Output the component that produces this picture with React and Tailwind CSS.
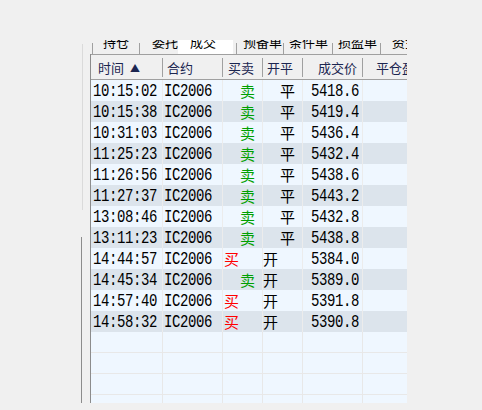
import React from 'react'

const TRADES = [
  ['10:15:02', 'IC2006', 'sell', 'close', '5418.6'],
  ['10:15:38', 'IC2006', 'sell', 'close', '5419.4'],
  ['10:31:03', 'IC2006', 'sell', 'close', '5436.4'],
  ['11:25:23', 'IC2006', 'sell', 'close', '5432.4'],
  ['11:26:56', 'IC2006', 'sell', 'close', '5438.6'],
  ['11:27:37', 'IC2006', 'sell', 'close', '5443.2'],
  ['13:08:46', 'IC2006', 'sell', 'close', '5432.8'],
  ['13:11:23', 'IC2006', 'sell', 'close', '5438.8'],
  ['14:44:57', 'IC2006', 'buy', 'open', '5384.0'],
  ['14:45:34', 'IC2006', 'sell', 'open', '5389.0'],
  ['14:57:40', 'IC2006', 'buy', 'open', '5391.8'],
  ['14:58:32', 'IC2006', 'buy', 'open', '5390.8'],
]

const cjk = { fontFamily: '"Noto Sans CJK SC", "Noto Sans", sans-serif' }
const mono = { fontFamily: '"Liberation Mono", "DejaVu Sans Mono", monospace' }

function Num({ children }) {
  return (
    <span className="inline-block scale-y-[1.3] text-[14px] leading-none tracking-[-0.4px] text-black" style={mono}>
      {children}
    </span>
  )
}

function TabSep() {
  return <span className="mt-[3px] h-[11px] w-px shrink-0 bg-[#a0a0a0]" />
}

function Tab({ label, w, pl, active }) {
  return (
    <div
      className={`shrink-0 overflow-hidden whitespace-nowrap text-[13px] leading-[13px] text-black ${active ? 'bg-white' : ''}`}
      style={{ ...cjk, width: w, paddingLeft: pl }}
    >
      <div className="-mt-[5px]">{label}</div>
    </div>
  )
}

function HeadCell({ w, children, right, pl = 0, pr = 0, last }) {
  return (
    <div className="flex h-full shrink-0 items-center overflow-hidden" style={{ width: w }}>
      <div
        className={`flex flex-1 items-center whitespace-nowrap pt-[1px] text-[13px] text-[#1b2550] ${right ? 'justify-end' : ''}`}
        style={{ ...cjk, paddingLeft: pl, paddingRight: pr }}
      >
        {children}
      </div>
      {!last && <span className="h-[19px] w-px shrink-0 bg-[#a0a0a0]" />}
    </div>
  )
}

export default function App() {
  return (
    <div className="flex h-[410px] w-[482px] overflow-hidden bg-[#f0f0f0]">
      {/* splitter edge */}
      <div className="w-[81px] shrink-0" />
      <div className="flex w-[2px] shrink-0 flex-col">
        <div className="h-[44px]" />
        <div className="ml-[1px] h-[166px] w-px bg-[#dadada]" />
        <div className="h-[27px]" />
        <div className="h-[166px] w-px bg-[#8c8c8c]" />
      </div>
      <div className="w-[7px] shrink-0" />

      <div className="flex w-[317px] shrink-0 flex-col pt-[40px]">
        {/* tabs */}
        <div className="flex h-[14px] overflow-hidden">
          <div className="w-[2px] shrink-0" />
          <TabSep />
          <Tab label="持仓" w={46} pl={10} />
          <TabSep />
          <Tab label="委托" w={38} pl={12} />
          <Tab label="成交" w={55} pl={12} active />
          <div className="w-[3px] shrink-0" />
          <TabSep />
          <Tab label="预备单" w={46} pl={6} />
          <TabSep />
          <Tab label="条件单" w={48} pl={5} />
          <TabSep />
          <Tab label="损盈单" w={47} pl={5} />
          <TabSep />
          <Tab label="资金" w={26} pl={11} />
        </div>

        {/* grid */}
        <div className="h-[349px] overflow-hidden border-l border-[#8c8c8c]">
          <div className="flex h-[26px] border-y border-[#a0a0a0] bg-[#f0f0f0]">
            <HeadCell w={72} pl={7}>
              时间<span className="ml-[6px] text-[10px]">▲</span>
            </HeadCell>
            <HeadCell w={60} pl={4}>合约</HeadCell>
            <HeadCell w={40} pl={5}>买卖</HeadCell>
            <HeadCell w={40} pl={4}>开平</HeadCell>
            <HeadCell w={60} right pr={5}>成交价</HeadCell>
            <HeadCell w={44} pl={13} last>平仓盈亏</HeadCell>
          </div>

          {TRADES.map(([time, code, side, oc, price], i) => (
            <div key={time} className={`flex h-[21px] ${i % 2 ? 'bg-[#dce4ec]' : 'bg-[#eff7ff]'}`}>
              <div className="flex w-[72px] shrink-0 items-center border-r border-[#ececec] pl-[2px]">
                <Num>{time}</Num>
              </div>
              <div className="flex w-[60px] shrink-0 items-center border-r border-[#ececec] pl-[1px]">
                <Num>{code}</Num>
              </div>
              <div
                className={`flex w-[40px] shrink-0 items-center border-r border-[#ececec] text-[15px] leading-none ${
                  side === 'buy' ? 'pl-[1px] text-[#ff0000]' : 'pl-[17px] text-[#00a000]'
                }`}
                style={cjk}
              >
                {side === 'buy' ? '买' : '卖'}
              </div>
              <div
                className={`flex w-[40px] shrink-0 items-center border-r border-[#ececec] text-[15px] leading-none text-black ${
                  oc === 'open' ? 'pl-0' : 'pl-[17px]'
                }`}
                style={cjk}
              >
                {oc === 'open' ? '开' : '平'}
              </div>
              <div className="flex w-[60px] shrink-0 items-center justify-end border-r border-[#ececec] pr-[3px]">
                <Num>{price}</Num>
              </div>
              <div className="w-[44px] shrink-0" />
            </div>
          ))}

          {[0, 1, 2, 3].map((r) => (
            <div key={r} className="flex h-[21px] border-b border-[#e8e8e8] bg-[#eff7ff]">
              <div className="w-[72px] shrink-0 border-r border-[#e8e8e8]" />
              <div className="w-[60px] shrink-0 border-r border-[#e8e8e8]" />
              <div className="w-[40px] shrink-0 border-r border-[#e8e8e8]" />
              <div className="w-[40px] shrink-0 border-r border-[#e8e8e8]" />
              <div className="w-[60px] shrink-0 border-r border-[#e8e8e8]" />
              <div className="w-[44px] shrink-0" />
            </div>
          ))}
        </div>
      </div>
    </div>
  )
}
